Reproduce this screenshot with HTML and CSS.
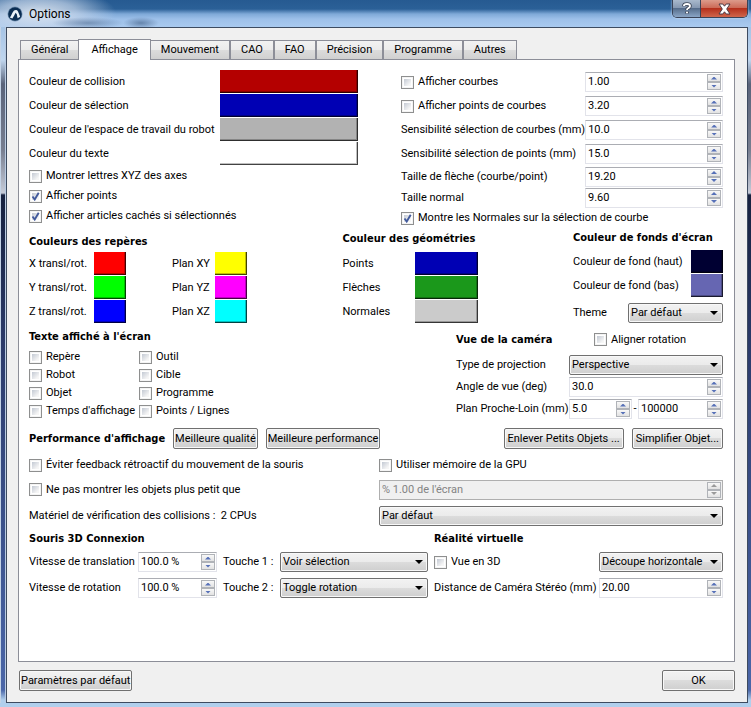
FILE: index.html
```
<!doctype html>
<html lang="fr">
<head>
    <meta charset="UTF-8">
    <meta name="viewport" content="width=device-width, initial-scale=1.0">
    <title>Options</title>
    <link rel="stylesheet" href="styles.css">
</head>
<body>
    <!-- Barre de titre -->
    <header class="titlebar">
        <svg class="app-icon" viewBox="0 0 16 16" aria-hidden="true">
            <circle cx="8" cy="8" r="7.5" fill="#7795b5"/>
            <circle cx="8" cy="8" r="6.8" fill="#0b2d52"/>
            <path d="M2.8 11.6 C4.6 10 5 6.4 7 4.6 C8.4 3.4 10.4 3.8 11 5.4 L13.2 10.8 L10.6 12.2 L9.8 8.2 L8.6 6.8 L7.2 9.6 L5.4 12.4 Z" fill="#e9f1f8"/>
        </svg>
        <h1 class="title">Options</h1>
        <div class="caption">
            <button class="caption-btn" type="button" aria-label="Aide">
                <svg width="10" height="13" viewBox="0 0 10 13">
                    <path d="M2 4.3 V3.6 Q2 2 5 2 Q8 2 8 4 Q8 5.4 6.4 6 Q5 6.6 5 8 M5 9.6 V11.4" fill="none" stroke="#3c4454" stroke-width="3.6"/>
                    <path d="M2 4 V3.6 Q2 2 5 2 Q8 2 8 4 Q8 5.4 6.4 6 Q5 6.6 5 8 M5 9.7 V11.3" fill="none" stroke="#fff" stroke-width="1.9"/>
                </svg>
            </button>
            <button class="caption-btn close" type="button" aria-label="Fermer">
                <svg width="13" height="12" viewBox="0 0 13 12">
                    <path d="M1 1 H4.8 L6.5 3.2 L8.2 1 H12 L8.7 6 L12 11 H8.2 L6.5 8.8 L4.8 11 H1 L4.3 6 Z" fill="#fff" stroke="#4c3a44" stroke-width="1"/>
                </svg>
            </button>
        </div>
    </header>

    <main class="client">
        <!-- Onglets -->
        <nav class="tabs" role="tablist">
            <button class="tab" role="tab" type="button">Général</button>
            <button class="tab active" role="tab" type="button" aria-selected="true">Affichage</button>
            <button class="tab" role="tab" type="button">Mouvement</button>
            <button class="tab" role="tab" type="button">CAO</button>
            <button class="tab" role="tab" type="button">FAO</button>
            <button class="tab" role="tab" type="button">Précision</button>
            <button class="tab" role="tab" type="button">Programme</button>
            <button class="tab" role="tab" type="button">Autres</button>
        </nav>

        <div class="pane" role="tabpanel">
            <!-- Couleurs et courbes -->
            <section class="general">
                <div>
                    <div class="row"><label for="cCollision">Couleur de collision</label><input class="swatch wide" type="color" id="cCollision" value="#b40000"></div>
                    <div class="row"><label for="cSelection">Couleur de sélection</label><input class="swatch wide" type="color" id="cSelection" value="#0000b4"></div>
                    <div class="row"><label for="cEspace">Couleur de l'espace de travail du robot</label><input class="swatch wide" type="color" id="cEspace" value="#b2b2b2"></div>
                    <div class="row"><label for="cTexte">Couleur du texte</label><input class="swatch wide" type="color" id="cTexte" value="#ffffff"></div>
                    <label class="check line"><input type="checkbox">Montrer lettres XYZ des axes</label>
                    <label class="check line"><input type="checkbox" checked>Afficher points</label>
                    <label class="check line"><input type="checkbox" checked>Afficher articles cachés si sélectionnés</label>
                </div>
                <div>
                    <div class="row">
                        <label class="check"><input type="checkbox">Afficher courbes</label>
                        <span class="spin wide"><input type="text" value="1.00" aria-label="Afficher courbes"><button type="button" class="up" aria-label="Plus"></button><button type="button" class="down" aria-label="Moins"></button></span>
                    </div>
                    <div class="row">
                        <label class="check"><input type="checkbox">Afficher points de courbes</label>
                        <span class="spin wide"><input type="text" value="3.20" aria-label="Afficher points de courbes"><button type="button" class="up" aria-label="Plus"></button><button type="button" class="down" aria-label="Moins"></button></span>
                    </div>
                    <div class="row">
                        <label for="sCourbes">Sensibilité sélection de courbes (mm)</label>
                        <span class="spin wide"><input type="text" id="sCourbes" value="10.0"><button type="button" class="up" aria-label="Plus"></button><button type="button" class="down" aria-label="Moins"></button></span>
                    </div>
                    <div class="row">
                        <label for="sPoints">Sensibilité sélection de points (mm)</label>
                        <span class="spin wide"><input type="text" id="sPoints" value="15.0"><button type="button" class="up" aria-label="Plus"></button><button type="button" class="down" aria-label="Moins"></button></span>
                    </div>
                    <div class="row short">
                        <label for="tFleche">Taille de flèche (courbe/point)</label>
                        <span class="spin wide"><input type="text" id="tFleche" value="19.20"><button type="button" class="up" aria-label="Plus"></button><button type="button" class="down" aria-label="Moins"></button></span>
                    </div>
                    <div class="row short">
                        <label for="tNormal">Taille normal</label>
                        <span class="spin wide"><input type="text" id="tNormal" value="9.60"><button type="button" class="up" aria-label="Plus"></button><button type="button" class="down" aria-label="Moins"></button></span>
                    </div>
                    <label class="check line"><input type="checkbox" checked>Montre les Normales sur la sélection de courbe</label>
                </div>
            </section>

            <!-- Palettes -->
            <section class="palettes">
                <div class="axes">
                    <h2>Couleurs des repères</h2>
                    <div class="frames">
                        <label for="cX">X transl/rot.</label><input class="swatch" type="color" id="cX" value="#ff0000">
                        <label for="cXY" class="plan">Plan XY</label><input class="swatch" type="color" id="cXY" value="#ffff00">
                        <label for="cY">Y transl/rot.</label><input class="swatch" type="color" id="cY" value="#00ff00">
                        <label for="cYZ" class="plan">Plan YZ</label><input class="swatch" type="color" id="cYZ" value="#ff00ff">
                        <label for="cZ">Z transl/rot.</label><input class="swatch" type="color" id="cZ" value="#0000ff">
                        <label for="cXZ" class="plan">Plan XZ</label><input class="swatch" type="color" id="cXZ" value="#00ffff">
                    </div>
                </div>
                <div class="geometry">
                    <h2>Couleur des géométries</h2>
                    <div class="row"><label for="gPoints">Points</label><input class="swatch medium" type="color" id="gPoints" value="#0000b4"></div>
                    <div class="row"><label for="gFleches">Flèches</label><input class="swatch medium" type="color" id="gFleches" value="#1b981b"></div>
                    <div class="row"><label for="gNormales">Normales</label><input class="swatch medium" type="color" id="gNormales" value="#cbcbcb"></div>
                </div>
                <div class="backdrop">
                    <h2>Couleur de fonds d'écran</h2>
                    <div class="row"><label for="fHaut">Couleur de fond (haut)</label><input class="swatch" type="color" id="fHaut" value="#000032"></div>
                    <div class="row"><label for="fBas">Couleur de fond (bas)</label><input class="swatch" type="color" id="fBas" value="#6666b2"></div>
                    <div class="row theme"><label for="theme">Theme</label><select id="theme"><option>Par défaut</option></select></div>
                </div>
            </section>

            <!-- Texte à l'écran et caméra -->
            <section class="screen">
                <div>
                    <h2>Texte affiché à l'écran</h2>
                    <div class="text-grid">
                        <label class="check"><input type="checkbox">Repère</label>
                        <label class="check"><input type="checkbox">Outil</label>
                        <label class="check"><input type="checkbox">Robot</label>
                        <label class="check"><input type="checkbox">Cible</label>
                        <label class="check"><input type="checkbox">Objet</label>
                        <label class="check"><input type="checkbox">Programme</label>
                        <label class="check"><input type="checkbox">Temps d'affichage</label>
                        <label class="check"><input type="checkbox">Points / Lignes</label>
                    </div>
                </div>
                <div class="camera">
                    <div class="camera-head">
                        <h2>Vue de la caméra</h2>
                        <label class="check"><input type="checkbox">Aligner rotation</label>
                    </div>
                    <div class="camera-row"><label for="projection">Type de projection</label><select id="projection"><option>Perspective</option></select></div>
                    <div class="camera-row">
                        <label for="angle">Angle de vue (deg)</label>
                        <span class="spin"><input type="text" id="angle" value="30.0"><button type="button" class="up" aria-label="Plus"></button><button type="button" class="down" aria-label="Moins"></button></span>
                    </div>
                    <div class="camera-row">
                        <label for="proche">Plan Proche-Loin (mm)</label>
                        <div class="range">
                            <span class="spin"><input type="text" id="proche" value="5.0"><button type="button" class="up" aria-label="Plus"></button><button type="button" class="down" aria-label="Moins"></button></span>
                            <span>-</span>
                            <span class="spin far"><input type="text" value="100000" aria-label="Plan loin"><button type="button" class="up" aria-label="Plus"></button><button type="button" class="down" aria-label="Moins"></button></span>
                        </div>
                    </div>
                </div>
            </section>

            <!-- Performance -->
            <section class="performance">
                <div class="perf-head">
                    <h2>Performance d'affichage</h2>
                    <button class="btn" type="button">Meilleure qualité</button>
                    <button class="btn" type="button">Meilleure performance</button>
                    <button class="btn roomy push" type="button">Enlever Petits Objets ...</button>
                    <button class="btn roomy" type="button">Simplifier Objet...</button>
                </div>
                <div class="perf-grid">
                    <label class="check"><input type="checkbox">Éviter feedback rétroactif du mouvement de la souris</label>
                    <label class="check"><input type="checkbox">Utiliser mémoire de la GPU</label>
                    <label class="check"><input type="checkbox">Ne pas montrer les objets plus petit que</label>
                    <span class="spin disabled"><input type="text" value="% 1.00 de l'écran" aria-label="Taille minimale" disabled><button type="button" class="up" aria-label="Plus" disabled></button><button type="button" class="down" aria-label="Moins" disabled></button></span>
                    <label for="cpu">Matériel de vérification des collisions :&nbsp; 2 CPUs</label>
                    <select id="cpu"><option>Par défaut</option></select>
                </div>
            </section>

            <!-- Souris 3D et réalité virtuelle -->
            <section class="devices">
                <div>
                    <h2>Souris 3D Connexion</h2>
                    <div class="mouse-grid">
                        <label for="vTrans">Vitesse de translation</label>
                        <span class="spin"><input type="text" id="vTrans" value="100.0 %"><button type="button" class="up" aria-label="Plus"></button><button type="button" class="down" aria-label="Moins"></button></span>
                        <label for="touche1">Touche 1 :</label>
                        <select id="touche1"><option>Voir sélection</option></select>
                        <label for="vRot">Vitesse de rotation</label>
                        <span class="spin"><input type="text" id="vRot" value="100.0 %"><button type="button" class="up" aria-label="Plus"></button><button type="button" class="down" aria-label="Moins"></button></span>
                        <label for="touche2">Touche 2 :</label>
                        <select id="touche2"><option>Toggle rotation</option></select>
                    </div>
                </div>
                <div>
                    <h2>Réalité virtuelle</h2>
                    <div class="vr-grid">
                        <label class="check"><input type="checkbox">Vue en 3D</label>
                        <select aria-label="Mode 3D"><option>Découpe horizontale</option></select>
                        <label for="stereo">Distance de Caméra Stéréo (mm)</label>
                        <span class="spin"><input type="text" id="stereo" value="20.00"><button type="button" class="up" aria-label="Plus"></button><button type="button" class="down" aria-label="Moins"></button></span>
                    </div>
                </div>
            </section>
        </div>

        <footer class="actions">
            <button class="btn" type="button">Paramètres par défaut</button>
            <button class="btn ok" type="button">OK</button>
        </footer>
    </main>
</body>
</html>
```
FILE: styles.css
```
* {
    box-sizing: border-box;
}

body {
    margin: 0;
    min-height: 100vh;
    padding: 0 3px 4px 6px;
    display: flex;
    flex-direction: column;
    font-family: Tahoma, Roboto, sans-serif;
    font-size: 11px;
    line-height: 14px;
    color: #000;
    white-space: nowrap;
    background:
        linear-gradient(#b0cfec, #b0cfec) bottom / 100% 4px no-repeat,
        linear-gradient(90deg, #c3d3e6 1px, transparent 1px, transparent 5px, #b9cbe2 5px, #b9cbe2 6px, transparent 6px),
        linear-gradient(#8fb4de 0, #c0d6ee 60px, #59637a 84px, #777e90 150px, #c5cbd8 193px, #16213f 195px, #2d3d6e 360px, #4a66a8 690px, #b0cfec 700px);
}

button, input, select {
    font: inherit;
    color: inherit;
    margin: 0;
}

h2 {
    margin: 0;
    font-family: Tahoma, "DejaVu Sans Condensed", sans-serif;
    font-size: 11px;
    line-height: 14px;
    font-weight: bold;
}

/* Barre de titre */
.titlebar {
    height: 27px;
    margin: 0 -3px 0 -6px;
    padding-left: 7px;
    display: flex;
    align-items: center;
    gap: 6px;
    background:
        radial-gradient(ellipse 36px 6px at 88px 23px, rgba(70, 100, 140, .55), transparent),
        radial-gradient(ellipse 18px 6px at 141px 23px, rgba(60, 90, 130, .6), transparent),
        radial-gradient(ellipse 78px 26px at 38px 13px, rgba(222, 230, 240, .95), rgba(200, 215, 235, .7) 50%, transparent),
        linear-gradient(#265a91 0, #2b6097 9px, #7fa9d8 14px, #9dc0e9 19px, #a9caef 27px);
}

.app-icon {
    width: 16px;
    height: 16px;
}

.title {
    margin: 0;
    font-size: 12px;
    font-weight: normal;
}

.caption {
    margin-left: auto;
    margin-right: 3px;
    align-self: flex-start;
    display: flex;
    border: 1px solid #3a4357;
    border-top: 0;
    border-radius: 0 0 5px 5px;
    overflow: hidden;
    box-shadow: 0 0 2px #dfeaf6;
}

.caption-btn {
    width: 28px;
    height: 17px;
    padding: 0;
    border: 0;
    border-right: 1px solid #3a4357;
    display: flex;
    align-items: center;
    justify-content: center;
    background: linear-gradient(#a9b9cc, #8699b2 45%, #566d8b 50%, #8aa5c5);
}

.caption-btn.close {
    width: 46px;
    border-right: 0;
    background: linear-gradient(#dc9b8b, #cc6b58 45%, #b5301c 50%, #d0664c);
}

/* Zone cliente */
.client {
    flex: 1;
    padding: 11px 12px 11px 11px;
    border: 1px solid #3d4b60;
    background: #f0f0f0;
    display: flex;
    flex-direction: column;
}

.tabs {
    display: flex;
    align-items: flex-end;
    padding-left: 2px;
}

.tab {
    height: 19px;
    padding: 0 10px;
    border: 1px solid #8c8e98;
    border-bottom: 0;
    background: linear-gradient(#f2f2f2, #ebebeb 50%, #dcdcdc 50%, #d0d0d0);
}

.tab.active {
    height: 21px;
    margin: 0 -1px -1px;
    padding: 0 12px 1px;
    background: #fff;
    position: relative;
}

.pane {
    flex: 1;
    padding: 10px 11px 10px 10px;
    border: 1px solid #8c8e98;
    background: #fff;
}

.row {
    height: 24px;
    display: flex;
    align-items: center;
    justify-content: space-between;
}

.row.short {
    height: 21px;
}

.line {
    height: 20px;
}

/* Cases à cocher */
.check {
    display: flex;
    align-items: center;
    gap: 4px;
}

.check input {
    appearance: none;
    width: 13px;
    height: 13px;
    flex: none;
    border: 1px solid #8e8f8f;
    background: linear-gradient(135deg, #c3c9d3, #f6f6f6 80%) content-box;
    padding: 2px;
    box-shadow: inset 0 0 0 1px #f4f4f4;
}

.check input:checked {
    background:
        url("data:image/svg+xml,%3Csvg xmlns='http://www.w3.org/2000/svg' viewBox='0 0 11 11'%3E%3Cpath d='M2.5 5.5 L4.7 8.5 L8.7 1.8' fill='none' stroke='%23425a9c' stroke-width='1.9'/%3E%3C/svg%3E") center / 11px 11px no-repeat border-box,
        linear-gradient(135deg, #c3c9d3, #f6f6f6 80%) content-box;
}

/* Couleurs */
.swatch {
    appearance: none;
    width: 32px;
    height: 23px;
    margin-bottom: 1px;
    padding: 0;
    border: 0;
    background: none;
}

.swatch::-webkit-color-swatch-wrapper {
    padding: 0;
}

.swatch::-webkit-color-swatch {
    border: 0;
    border-radius: 0;
    box-shadow: inset -1px -1px rgba(0, 0, 0, .65), inset -2px -2px rgba(0, 0, 0, .25);
}

.swatch.wide, .spin.wide {
    flex: none;
    width: 138px;
}

.swatch.medium {
    width: 63px;
}

/* Champs numériques */
.spin {
    height: 20px;
    padding: 1px;
    display: grid;
    grid-template-columns: minmax(0, 1fr) 14px;
    grid-template-rows: 8px 8px;
    border: 1px solid #e2e3ea;
    border-top-color: #abadb3;
    background: #fff;
}

.spin input {
    grid-row: 1 / 3;
    min-width: 0;
    padding: 0 1px;
    border: 0;
    background: none;
}

.spin button {
    padding: 0;
    border: 1px solid #b0b3b8;
    background: linear-gradient(#f8f8f8, #e2e2e2);
    display: flex;
    align-items: center;
    justify-content: center;
}

.spin button::before {
    content: "";
    width: 6px;
    height: 3px;
    background: #5670b8;
    clip-path: polygon(50% 0, 100% 100%, 0 100%);
}

.spin .down::before {
    clip-path: polygon(0 0, 100% 0, 50% 100%);
}

.spin.disabled {
    border-color: #afafaf;
    background: #f0f0f0;
    color: #838383;
}

.spin.disabled button::before {
    background: #9a9a9a;
}

/* Listes et boutons */
select, .btn {
    border: 1px solid #707070;
    border-radius: 2px;
    box-shadow: inset 0 0 0 1px #f8f8f8;
    background: linear-gradient(#f2f2f2, #ebebeb 50%, #dcdcdc 50%, #cfcfcf);
}

select {
    appearance: none;
    height: 20px;
    padding: 0 16px 0 2px;
    background:
        url("data:image/svg+xml,%3Csvg xmlns='http://www.w3.org/2000/svg' viewBox='0 0 8 4'%3E%3Cpath d='M0 0 H8 L4 4 Z'/%3E%3C/svg%3E") right 4px center / 8px 4px no-repeat,
        linear-gradient(#f2f2f2, #ebebeb 50%, #dcdcdc 50%, #cfcfcf);
}

.btn {
    height: 21px;
    padding: 0 1px;
}

.btn.roomy {
    padding: 0 3px;
}

/* Sections */
.general {
    display: grid;
    grid-template-columns: minmax(0, 329fr) minmax(0, 322fr);
    gap: 43px;
}

.palettes {
    margin-top: 3px;
    display: flex;
    justify-content: space-between;
}

.axes {
    padding-top: 4px;
}

.frames {
    margin-top: 3px;
    display: grid;
    grid-template-columns: 65px 32px 89px 32px;
    grid-auto-rows: 24px;
    align-items: center;
}

.frames .plan {
    padding-left: 46px;
}

.geometry {
    width: 135px;
    padding-top: 1px;
}

.geometry h2 {
    margin-bottom: 6px;
}

.backdrop {
    width: 150px;
}

.backdrop h2 {
    margin-bottom: 5px;
}

.backdrop .theme {
    height: 30px;
}

.backdrop select {
    width: 95px;
}

.screen {
    margin-top: 2px;
    display: flex;
    justify-content: space-between;
}

.text-grid {
    margin-top: 4px;
    display: grid;
    grid-template-columns: 110px auto;
    grid-auto-rows: 18px;
    align-items: center;
}

.camera {
    width: 267px;
    padding-top: 2px;
}

.camera-head {
    height: 15px;
    margin-bottom: 7px;
    display: grid;
    grid-template-columns: 138px 1fr;
    align-items: center;
}

.camera-row {
    height: 22px;
    display: grid;
    grid-template-columns: minmax(0, 1fr) 154px;
    align-items: center;
}

.range {
    display: flex;
    align-items: center;
    justify-content: space-between;
}

.range .spin {
    width: 63px;
}

.range .far {
    width: 85px;
}

.perf-head {
    margin-top: 8px;
    display: flex;
    align-items: center;
    gap: 8px;
}

.perf-head .push {
    margin-left: auto;
}

.perf-grid {
    margin-top: 4px;
    display: grid;
    grid-template-columns: minmax(0, 350fr) minmax(0, 344fr);
    grid-template-rows: 24px 25px 28px;
    align-items: center;
}

.devices {
    margin-top: 2px;
    display: flex;
    gap: 6px;
}

.devices > :first-child {
    flex: 399;
}

.devices > :last-child {
    flex: 289;
}

.mouse-grid, .vr-grid {
    margin-top: 3px;
    display: grid;
    grid-auto-rows: 26px;
    align-items: center;
}

.mouse-grid {
    grid-template-columns: 109px 79px 63px 1fr;
}

.mouse-grid label:nth-of-type(even) {
    padding-left: 6px;
}

.vr-grid {
    grid-template-columns: 1fr 124px;
}

.actions {
    margin-top: 8px;
    display: flex;
    justify-content: space-between;
    padding-left: 1px;
}

.actions .ok {
    width: 73px;
}
```
